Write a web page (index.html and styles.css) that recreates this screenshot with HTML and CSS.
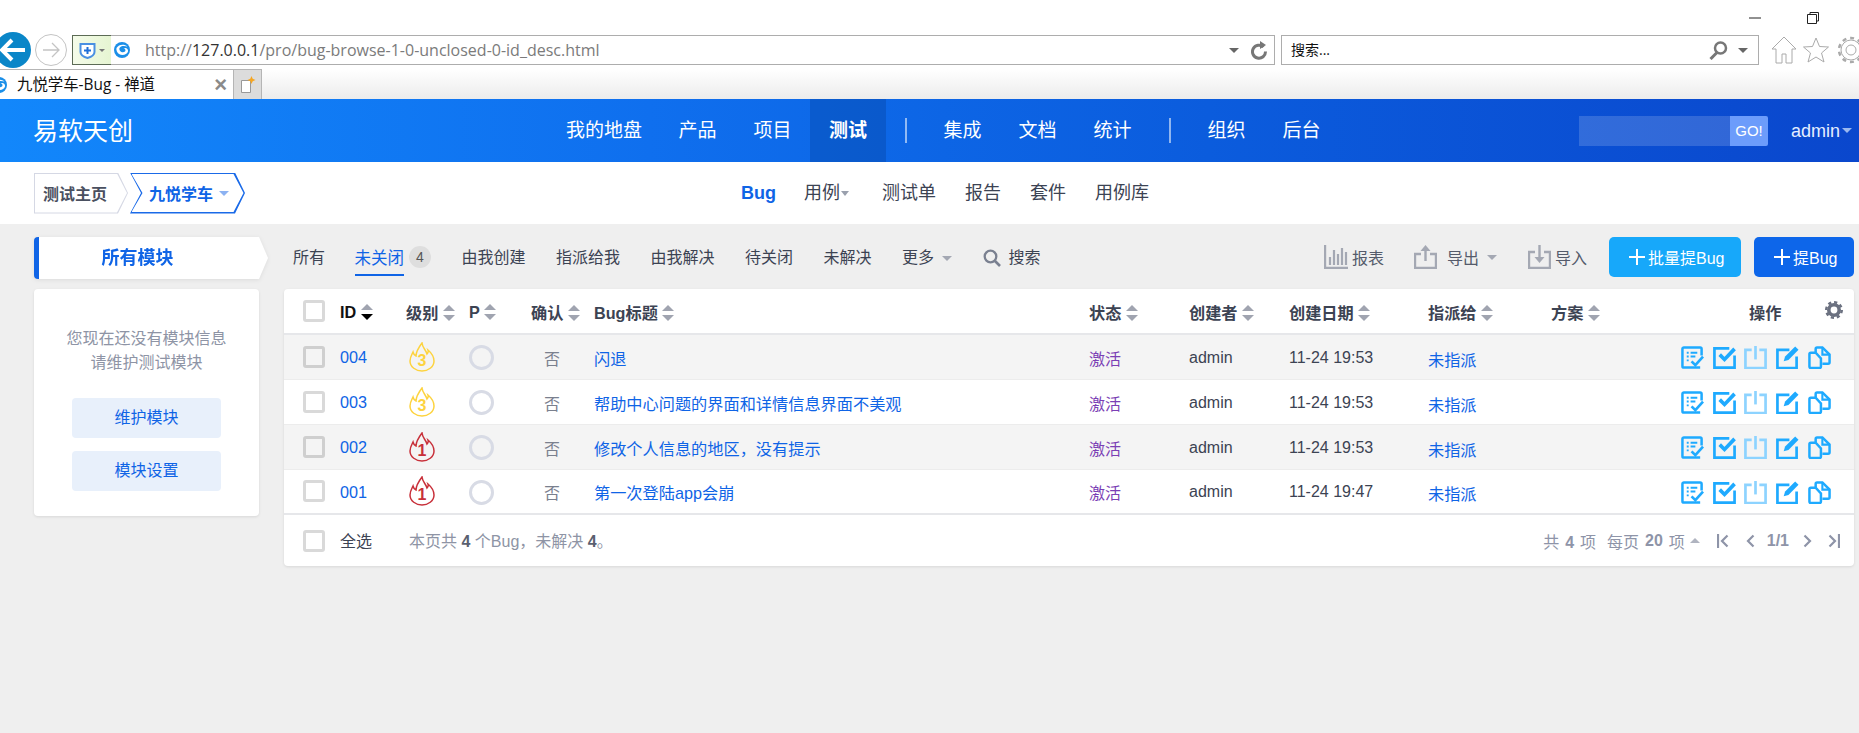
FILE: index.html
```html
<!DOCTYPE html>
<html lang="zh">
<head>
<meta charset="utf-8">
<title>九悦学车-Bug - 禅道</title>
<link rel="stylesheet" href="styles.css">
</head>
<body>
<svg class="defs" width="0" height="0" aria-hidden="true">
  <symbol id="i-doc" viewBox="0 0 24 24"><path d="M21.500 10V3a1.500 1.500 0 0 0-1.500-1.500H3A1.500 1.500 0 0 0 1.500 3v18A1.500 1.500 0 0 0 3 22.500h17" fill="none" stroke="currentColor" stroke-width="2.600"/><path d="M6 7h2m2 0h7M6 11h2m2 0h5M6 15h2" stroke="currentColor" stroke-width="2" fill="none"/><path d="M11 16l4 4 8-9" fill="none" stroke="currentColor" stroke-width="2.800"/></symbol>
  <symbol id="i-check" viewBox="0 0 24 24"><path d="M22.500 10v12.500h-21v-20H17" fill="none" stroke="currentColor" stroke-width="2.800"/><path d="M7 9l5 5 10.500-11" fill="none" stroke="currentColor" stroke-width="3.800"/></symbol>
  <symbol id="i-close" viewBox="0 0 24 24"><path d="M8 4H1.500v19h21V4H16" fill="none" stroke="currentColor" stroke-width="2.800"/><path d="M12 0v14" fill="none" stroke="currentColor" stroke-width="2.800"/></symbol>
  <symbol id="i-edit" viewBox="0 0 24 24"><path d="M14 4H1.500v19h20V11" fill="none" stroke="currentColor" stroke-width="2.800"/><path d="M9.500 11L20 .5l3.500 3.500L13 14.500l-5 1.500z" fill="currentColor"/></symbol>
  <symbol id="i-copy" viewBox="0 0 24 24"><path d="M8 7H3a1.500 1.500 0 0 0-1.500 1.500v13A1.500 1.500 0 0 0 3 23h9a1.500 1.500 0 0 0 1.500-1.500V13L8 7z" fill="none" stroke="currentColor" stroke-width="2.600"/><path d="M8 7V3a1.500 1.500 0 0 1 1.500-1.500H15l7.500 7.500v8a1.500 1.500 0 0 1-1.500 1.500h-6" fill="none" stroke="currentColor" stroke-width="2.600"/><path d="M15 1.500V9h7.500" fill="none" stroke="currentColor" stroke-width="2.200"/></symbol>
  <symbol id="i-flame" viewBox="0 0 26 30"><path d="M13 1c.5 5 4 7 5 11 1-1 1.500-2.500 1-4 3.500 3 6 7 6 11 0 6-6 10-12 10S1 25 1 19c0-3.500 1.500-6 3-9 .5 2 1.500 3.500 3 4 0-5 3-9 6-13z" fill="none" stroke="currentColor" stroke-width="1.500"/></symbol>
  <symbol id="i-plus" viewBox="0 0 16 16"><path d="M8 0v16M0 8h16" stroke="currentColor" stroke-width="2"/></symbol>
  <symbol id="i-globe" viewBox="0 0 16 16"><circle cx="8" cy="8" r="8" fill="#1b8fe8"/><path d="M2.500 6C4.500 2.500 10 1.500 13.500 4.500 10.500 3.500 6.500 3.500 5.500 6c-1 3 3 5.500 5.500 3.500 1-1 .5-3-1.500-3 2-1.500 5 0 4.500 3-1 3.500-6 4.500-9 2.500-2-1.500-3-4-2.500-6z" fill="#fff"/></symbol>
</svg>

<div class="page">
  <header class="chrome">
    <div class="winbar">
      <svg class="win-min" width="12" height="2" viewBox="0 0 12 2"><path d="M0 1h12" stroke="#222" stroke-width="1"/></svg>
      <svg class="win-restore" width="12" height="12" viewBox="0 0 12 12"><path d="M.5 2.500h9v9h-9zM3 2.500V.5h8.500V9H9.500" fill="none" stroke="#222"/></svg>
    </div>
    <div class="toolbar">
      <span class="back"><svg width="26" height="24" viewBox="0 0 26 24"><path d="M12 2L2 12l10 10M3 12h22" fill="none" stroke="#fff" stroke-width="4"/></svg></span>
      <span class="forward"><svg width="18" height="16" viewBox="0 0 18 16"><path d="M10 1l7 7-7 7M17 8H1" fill="none" stroke="#c4c4c4" stroke-width="1.300"/></svg></span>
      <div class="address">
        <span class="shield">
          <svg width="17" height="17" viewBox="0 0 17 17"><path d="M1.500 2h14v8c0 3-3.500 5-7 6-3.500-1-7-3-7-6z" fill="#fff" stroke="#4a90e2" stroke-width="2"/><path d="M8.500 5v7M5 8.500h7" stroke="#1f6fd8" stroke-width="2"/></svg>
          <i class="mini-caret"></i>
        </span>
        <svg class="globe" width="16" height="16"><use href="#i-globe"/></svg>
        <span class="url">http://<b>127.0.0.1</b>/pro/bug-browse-1-0-unclosed-0-id_desc.html</span>
        <i class="gray-caret"></i>
        <svg class="reload" width="17" height="19" viewBox="0 0 17 19"><path d="M12.500 6a6.500 6.500 0 1 0 2 4.500" fill="none" stroke="#777" stroke-width="3"/><path d="M9 0v8l6-4z" fill="#777"/></svg>
      </div>
      <div class="searchbar">
        <span class="search-ph">搜索...</span>
        <svg class="lens" width="19" height="19" viewBox="0 0 19 19"><circle cx="11.500" cy="7" r="5.500" fill="none" stroke="#777" stroke-width="2.500"/><path d="M8 11.500L1.500 18" stroke="#777" stroke-width="3"/></svg>
        <i class="gray-caret"></i>
      </div>
      <div class="tools">
        <svg width="26" height="28" viewBox="0 0 26 28"><path d="M13 1L1 13h4v14h6v-9h4v9h6V13h4z" fill="#fff" stroke="#aaa"/></svg>
        <svg width="26" height="28" viewBox="0 0 26 28"><path d="M13 2l3.500 8.500 9 .5-7 6 2.500 9-8-5-8 5 2.500-9-7-6 9-.5z" fill="#fff" stroke="#aaa"/></svg>
        <svg class="tool-gear" width="28" height="28" viewBox="0 0 28 28"><circle cx="14" cy="14" r="5" fill="none" stroke="#aaa"/><circle cx="14" cy="14" r="10" fill="none" stroke="#aaa" stroke-width="1"/><circle cx="14" cy="14" r="12" fill="none" stroke="#aaa" stroke-width="2.500" stroke-dasharray="4 3.900"/></svg>
      </div>
    </div>
    <div class="tabstrip">
      <div class="tab">
        <svg class="favicon" width="16" height="16"><use href="#i-globe"/></svg>
        <span class="tab-title">九悦学车-Bug - 禅道</span>
        <span class="tab-x">×</span>
      </div>
      <div class="newtab"><svg width="16" height="18" viewBox="0 0 16 18"><path d="M1.500 4.500h9v12h-9z" fill="#fff" stroke="#999"/><path d="M11.500 0l1.200 2.800 2.800 1.200-2.800 1.200-1.200 2.800-1.200-2.800L7.500 4l2.800-1.200z" fill="#f5a623"/></svg></div>
    </div>
  </header>

  <nav class="mainnav">
    <div class="logo">易软天创</div>
    <ul class="navlist">
      <li class="first">我的地盘</li><li>产品</li><li>项目</li><li class="active">测试</li>
      <li class="divider"></li>
      <li>集成</li><li>文档</li><li>统计</li>
      <li class="divider"></li>
      <li>组织</li><li>后台</li>
    </ul>
    <div class="navsearch"><span class="navsearch-input"></span><span class="go">GO!</span></div>
    <div class="user">admin<i class="user-caret"></i></div>
  </nav>

  <div class="subnav">
    <div class="crumbs">
      <a class="crumb crumb-home"><span>测试主页</span></a>
      <a class="crumb crumb-cur"><span>九悦学车</span><i class="blue-caret"></i></a>
    </div>
    <ul class="sublist">
      <li class="on">Bug</li>
      <li class="with-caret">用例<i class="small-caret"></i></li>
      <li>测试单</li><li>报告</li><li>套件</li><li>用例库</li>
    </ul>
  </div>

  <main class="main">
    <aside class="side">
      <div class="side-title-wrap"><div class="side-title">所有模块</div></div>
      <div class="side-card">
        <p class="side-msg">您现在还没有模块信息<br>请维护测试模块</p>
        <a class="side-btn">维护模块</a>
        <a class="side-btn">模块设置</a>
      </div>
    </aside>

    <section class="content">
      <div class="actions">
        <span class="fl">所有</span>
        <span class="fl fl-on"><span class="fl-u">未关闭</span><em class="badge">4</em></span>
        <span class="fl">由我创建</span>
        <span class="fl">指派给我</span>
        <span class="fl">由我解决</span>
        <span class="fl">待关闭</span>
        <span class="fl">未解决</span>
        <span class="fl">更多<i class="more-caret"></i></span>
        <span class="fl fl-search">
          <svg width="18" height="18" viewBox="0 0 18 18"><circle cx="7.500" cy="7.500" r="5.800" fill="none" stroke="#7a8090" stroke-width="2.300"/><path d="M12 12l5 5" stroke="#7a8090" stroke-width="2.600"/></svg>
          搜索
        </span>
        <div class="act-right">
          <span class="act act-report">
            <svg width="24" height="24" viewBox="0 0 24 24"><path d="M1 0v23h23" fill="none" stroke="#a4a8b3" stroke-width="2.400"/><path d="M6 12v8M10 5v15M14 9v11M18 3v17M22 7v13" stroke="#a4a8b3" stroke-width="2.200"/></svg>
            报表
          </span>
          <span class="act act-export">
            <svg width="23" height="24" viewBox="0 0 23 24"><path d="M7 9H1v14h21V9h-6" fill="none" stroke="#a4a8b3" stroke-width="2.400"/><path d="M11.500 16V3" stroke="#a4a8b3" stroke-width="2.400"/><path d="M11.500 0l5 6h-10z" fill="#a4a8b3"/></svg>
            <span class="act-t">导出</span><i class="more-caret"></i>
          </span>
          <span class="act act-import">
            <svg width="23" height="24" viewBox="0 0 23 24"><path d="M7 7H1v16h21V7h-6" fill="none" stroke="#a4a8b3" stroke-width="2.400"/><path d="M11.500 0v13" stroke="#a4a8b3" stroke-width="2.400"/><path d="M11.500 18l5-6h-10z" fill="#a4a8b3"/></svg>
            导入
          </span>
          <a class="btn btn-light"><svg width="16" height="16"><use href="#i-plus"/></svg>批量提Bug</a>
          <a class="btn btn-primary"><svg width="16" height="16"><use href="#i-plus"/></svg>提Bug</a>
        </div>
      </div>

      <div class="panel">
        <table class="bugs">
          <colgroup>
            <col class="c-check"><col class="c-id"><col class="c-pri"><col class="c-p"><col class="c-conf"><col class="c-title"><col class="c-status"><col class="c-creator"><col class="c-date"><col class="c-assign"><col class="c-plan"><col class="c-act">
          </colgroup>
          <thead>
            <tr>
              <th class="cell-check"><span class="cb"></span></th>
              <th class="th-id">ID<i class="sort sort-desc"></i></th>
              <th>级别<i class="sort"></i></th>
              <th>P<i class="sort"></i></th>
              <th>确认<i class="sort"></i></th>
              <th>Bug标题<i class="sort"></i></th>
              <th>状态<i class="sort"></i></th>
              <th>创建者<i class="sort"></i></th>
              <th>创建日期<i class="sort"></i></th>
              <th>指派给<i class="sort"></i></th>
              <th>方案<i class="sort"></i></th>
              <th class="th-act"><span class="th-act-t">操作</span>
                <svg class="gear" width="18" height="18" viewBox="0 0 18 18"><circle cx="9" cy="9" r="5.200" fill="none" stroke="#6b7180" stroke-width="3.600"/><circle cx="9" cy="9" r="7.800" fill="none" stroke="#6b7180" stroke-width="2.400" stroke-dasharray="3.200 2.900"/></svg>
              </th>
            </tr>
          </thead>
          <tbody>
            <tr>
              <td class="cell-check"><span class="cb"></span></td><td><a class="lnk">004</a></td>
              <td class="pri pri-3"><span class="flame"><svg width="26" height="30"><use href="#i-flame"/></svg><b>3</b></span></td>
              <td><span class="ring"></span></td><td class="no">否</td><td><a class="lnk">闪退</a></td>
              <td class="st">激活</td><td class="tx">admin</td><td class="tx">11-24 19:53</td><td class="assign"><a class="lnk">未指派</a></td><td></td>
              <td class="ops"><svg class="op"><use href="#i-doc"/></svg><svg class="op"><use href="#i-check"/></svg><svg class="op op-off"><use href="#i-close"/></svg><svg class="op"><use href="#i-edit"/></svg><svg class="op"><use href="#i-copy"/></svg></td>
            </tr>
            <tr>
              <td class="cell-check"><span class="cb"></span></td><td><a class="lnk">003</a></td>
              <td class="pri pri-3"><span class="flame"><svg width="26" height="30"><use href="#i-flame"/></svg><b>3</b></span></td>
              <td><span class="ring"></span></td><td class="no">否</td><td><a class="lnk">帮助中心问题的界面和详情信息界面不美观</a></td>
              <td class="st">激活</td><td class="tx">admin</td><td class="tx">11-24 19:53</td><td class="assign"><a class="lnk">未指派</a></td><td></td>
              <td class="ops"><svg class="op"><use href="#i-doc"/></svg><svg class="op"><use href="#i-check"/></svg><svg class="op op-off"><use href="#i-close"/></svg><svg class="op"><use href="#i-edit"/></svg><svg class="op"><use href="#i-copy"/></svg></td>
            </tr>
            <tr>
              <td class="cell-check"><span class="cb"></span></td><td><a class="lnk">002</a></td>
              <td class="pri pri-1"><span class="flame"><svg width="26" height="30"><use href="#i-flame"/></svg><b>1</b></span></td>
              <td><span class="ring"></span></td><td class="no">否</td><td><a class="lnk">修改个人信息的地区，没有提示</a></td>
              <td class="st">激活</td><td class="tx">admin</td><td class="tx">11-24 19:53</td><td class="assign"><a class="lnk">未指派</a></td><td></td>
              <td class="ops"><svg class="op"><use href="#i-doc"/></svg><svg class="op"><use href="#i-check"/></svg><svg class="op op-off"><use href="#i-close"/></svg><svg class="op"><use href="#i-edit"/></svg><svg class="op"><use href="#i-copy"/></svg></td>
            </tr>
            <tr>
              <td class="cell-check"><span class="cb"></span></td><td><a class="lnk">001</a></td>
              <td class="pri pri-1"><span class="flame"><svg width="26" height="30"><use href="#i-flame"/></svg><b>1</b></span></td>
              <td><span class="ring"></span></td><td class="no">否</td><td><a class="lnk">第一次登陆app会崩</a></td>
              <td class="st">激活</td><td class="tx">admin</td><td class="tx">11-24 19:47</td><td class="assign"><a class="lnk">未指派</a></td><td></td>
              <td class="ops"><svg class="op"><use href="#i-doc"/></svg><svg class="op"><use href="#i-check"/></svg><svg class="op op-off"><use href="#i-close"/></svg><svg class="op"><use href="#i-edit"/></svg><svg class="op"><use href="#i-copy"/></svg></td>
            </tr>
          </tbody>
        </table>
        <div class="tfoot">
          <span class="cb"></span>
          <span class="all">全选</span>
          <span class="sum">本页共 <b>4</b> 个Bug，未解决 <b>4</b>。</span>
          <div class="pager">
            <span>共 <b>4</b> 项</span>
            <span class="per">每页 <b>20</b> 项<i class="up-caret"></i></span>
            <svg class="pg pg-first" width="12" height="14" viewBox="0 0 12 14"><path d="M1 0v14M10.500 1.500L5 7l5.500 5.500" fill="none" stroke="#8e94a8" stroke-width="2.200"/></svg>
            <svg class="pg pg-prev" width="9" height="14" viewBox="0 0 9 14"><path d="M7.500 1.500L2 7l5.500 5.500" fill="none" stroke="#8e94a8" stroke-width="2.200"/></svg>
            <b class="pg-num">1/1</b>
            <svg class="pg pg-next" width="9" height="14" viewBox="0 0 9 14"><path d="M1.500 1.500L7 7l-5.500 5.500" fill="none" stroke="#8e94a8" stroke-width="2.200"/></svg>
            <svg class="pg pg-last" width="12" height="14" viewBox="0 0 12 14"><path d="M11 0v14M1.500 1.500L7 7l-5.500 5.500" fill="none" stroke="#8e94a8" stroke-width="2.200"/></svg>
          </div>
        </div>
      </div>
    </section>
  </main>
</div>
</body>
</html>
```

FILE: styles.css
```css
* { box-sizing: border-box; }
html, body { margin: 0; height: 100%; overflow: hidden; }
body {
  font-family: "Liberation Sans", "Noto Sans CJK SC", sans-serif;
  font-size: 16px;
  color: #3c4353;
  background: #efefef;
}
i, em { font-style: normal; }
ul { list-style: none; margin: 0; padding: 0; }
.defs { position: absolute; }
.page { display: flex; flex-direction: column; height: 733px; width: 1859px; overflow: hidden; }

/* browser chrome */
.chrome { height: 99px; flex: none; background: #fff; }
.winbar { height: 35px; display: flex; align-items: center; padding-left: 1749px; }
.win-min { margin-right: 46px; }
.toolbar { height: 30px; display: flex; align-items: center; }
.back {
  width: 36px; height: 36px; margin-left: -5px; border-radius: 50%;
  background: #0a86c8; display: flex; align-items: center; justify-content: center; flex: none;
}
.forward {
  width: 32px; height: 32px; margin-left: 4px; border: 1px solid #c4c4c4; border-radius: 50%;
  display: flex; align-items: center; justify-content: center; flex: none;
}
.address {
  width: 1203px; height: 30px; margin-left: 5px; border: 1px solid #adadad; display: flex; align-items: center; flex: none;
}
.shield {
  width: 39px; height: 30px; margin: -1px 0 -1px -1px; border: 1px solid #5c6b55; border-right: 0;
  background: linear-gradient(90deg, #f4fbe9, #e6f5d2); display: flex; align-items: center; padding-left: 6px; flex: none;
}
.mini-caret { margin-left: 3px; border: 3px solid transparent; border-top: 3px solid #777; border-bottom: 0; }
.globe { margin-left: 3px; flex: none; }
.url { margin-left: 15px; font-family: "Open Sans", sans-serif; font-size: 16px; color: #7b7b7b; flex: 1; white-space: nowrap; line-height: 20px; }
.url b { font-weight: 400; color: #333; }
.gray-caret { flex: none; border: 5px solid transparent; border-top: 5px solid #666; border-bottom: 0; }
.reload { margin: 0 6px 0 12px; flex: none; }
.searchbar {
  width: 478px; height: 30px; margin-left: 6px; border: 1px solid #adadad; display: flex; align-items: center; padding: 0 10px 0 9px; flex: none;
}
.search-ph { flex: 1; font-size: 14px; color: #111; line-height: 20px; font-family: "Open Sans", "Noto Sans CJK SC", sans-serif; }
.lens { margin-right: 10px; }
.tools { display: flex; margin-left: 12px; gap: 6px; align-items: center; flex: none; }
.tool-gear { margin-left: 2px; }
.tabstrip {
  height: 34px; display: flex; align-items: flex-end;
  background: linear-gradient(#fff 0, #fff 4px, #ececec 100%);
}
.tab {
  width: 233px; height: 30px; background: #fff; display: flex; align-items: center; border-top: 1px solid #b5b5b5;
  flex: none;
}
.favicon { margin-left: -9px; flex: none; }
.tab-title { margin-left: 10px; font-family: "Open Sans", "Noto Sans CJK SC", sans-serif; font-size: 15.400px; color: #111; line-height: 20px; flex: 1; white-space: nowrap; }
.tab-x { font-size: 22px; color: #8a8a8a; margin-right: 6px; line-height: 20px; font-weight: 700; font-family: "Liberation Sans", sans-serif; }
.newtab {
  width: 29px; height: 30px; background: #dcdcdc; border: 1px solid #b5b5b5; border-bottom: 0;
  display: flex; align-items: center; justify-content: center; flex: none;
}

/* main nav */
.mainnav {
  height: 63px; flex: none; display: flex; align-items: center; color: #fff;
  background: linear-gradient(90deg, #1287fb 0%, #0f6fee 35%, #0b5cdd 65%, #0a47cd 100%);
}
.logo { width: 548px; padding-left: 33px; font-size: 25px; line-height: 36px; flex: none; }
.navlist { display: flex; height: 63px; align-items: stretch; flex: none; width: 1031px; }
.navlist li { width: 75px; font-size: 19px; line-height: 63px; text-align: center; flex: none; }
.navlist li.first { width: 112px; }
.navlist li.active { background: rgba(0, 40, 110, .22); font-weight: 700; width: 76px; }
.navlist li.divider { width: 39px; }
.navlist li.divider::before { content: ""; display: block; width: 2px; height: 25px; margin: 19px auto 0; background: rgba(255, 255, 255, .55); }
.navsearch { display: flex; width: 189px; height: 30px; flex: none; }
.navsearch-input { flex: 1; background: rgba(255, 255, 255, .16); }
.go { width: 38px; background: #6c9cfb; border-radius: 0 2px 2px 0; text-align: center; font-size: 15px; line-height: 30px; }
.user { margin-left: 23px; font-size: 18px; line-height: 30px; display: flex; align-items: center; flex: none; color: #e4eeff; }
.user-caret { margin-left: 2px; border: 5px solid transparent; border-top: 5px solid #9ab8f0; border-bottom: 0; }

/* sub nav */
.subnav { height: 62px; flex: none; background: #fff; display: flex; align-items: center; padding-left: 34px; }
.crumbs { display: flex; width: 707px; flex: none; }
.crumb { height: 41px; position: relative; display: flex; align-items: center; font-weight: 700; font-size: 16px; }
.crumb span { position: relative; z-index: 1; }
.crumb::before { content: ""; position: absolute; inset: 0; background: #d5d8e4; }
.crumb::after { content: ""; position: absolute; inset: 1px; background: #fff; }
.crumb-home { width: 94px; padding-left: 9px; color: #4a5060; clip-path: polygon(0 0, 84px 0, 100% 50%, 84px 100%, 0 100%); }
.crumb-home::after { clip-path: polygon(0 0, 82px 0, 100% 50%, 82px 100%, 0 100%); }
.crumb-cur { width: 115px; margin-left: 2px; padding-left: 19px; color: #0f64e6; clip-path: polygon(0 0, 105px 0, 100% 50%, 105px 100%, 0 100%, 11px 50%); }
.crumb-cur::before { background: #1a6ae8; }
.crumb-cur::after { inset: 1.500px; clip-path: polygon(0 0, 102px 0, 100% 50%, 102px 100%, 0 100%, 11px 50%); }
.blue-caret { position: relative; z-index: 1; margin-left: 6px; border: 5px solid transparent; border-top: 5px solid #8cb2f2; border-bottom: 0; }
.sublist { display: flex; align-items: center; }
.sublist li { font-size: 18px; line-height: 26px; margin-right: 29px; color: #3c4353; display: flex; align-items: center; }
.sublist li.on { font-weight: 700; color: #0f64e6; margin-right: 28px; }
.sublist li.with-caret { margin-right: 33px; }
.small-caret { margin-left: 1px; border: 4.500px solid transparent; border-top: 5px solid #9aa0ad; border-bottom: 0; }

/* main */
.main { flex: 1; display: flex; padding: 13px 5px 0 34px; align-items: flex-start; }
.side { width: 225px; flex: none; }
.side-title-wrap { filter: drop-shadow(0 1px 2px rgba(0, 0, 0, .08)); width: 234px; }
.side-title {
  height: 42px; background: #fff; border-left: 5px solid #0f64e6; border-radius: 4px 0 0 4px; color: #0f64e6;
  font-weight: 700; font-size: 18px; line-height: 42px; text-align: center; padding-right: 32px;
  clip-path: polygon(0 0, 225px 0, 100% 50%, 225px 100%, 0 100%);
}
.side-card {
  margin-top: 10px; height: 227px; background: #fff; border-radius: 4px; padding: 38px 38px 0;
  box-shadow: 0 1px 3px rgba(0, 0, 0, .1); text-align: center;
}
.side-msg { margin: 0 -38px; height: 71px; color: #8e94a5; font-size: 16px; line-height: 24px; }
.side-btn { display: block; height: 40px; background: #e8f0fb; border-radius: 4px; color: #0f64e6; font-size: 16px; line-height: 40px; margin-bottom: 13px; }
.content { margin-left: 25px; flex: 1; min-width: 0; }

.actions { height: 52px; display: flex; align-items: flex-start; gap: 30.500px; padding-left: 9px; }
.fl { height: 40px; padding-top: 2px; font-size: 16px; line-height: 24px; color: #3c4353; display: flex; align-items: center; white-space: nowrap; }
.fl-on { color: #0f64e6; margin-left: -1px; padding-top: 0; }
.fl-u { border-bottom: 2px solid #0f64e6; height: 35px; line-height: 35px; margin-top: 2px; font-size: 16.500px; }
.badge { width: 22px; height: 22px; border-radius: 50%; background: #dedede; color: #555; font-size: 14px; line-height: 22px; text-align: center; margin-left: 5px; }
.more-caret { margin-left: 8px; border: 5px solid transparent; border-top: 5px solid #a4a8b3; border-bottom: 0; }
.fl-search { gap: 8px; }
.act-right { margin-left: auto; display: flex; align-items: center; height: 40px; }
.act { display: flex; align-items: center; font-size: 16px; color: #555b6b; white-space: nowrap; }
.act-report { gap: 4px; }
.act-export { margin-left: 30px; }
.act-t { margin-left: 10px; }
.act-import { margin-left: 31px; gap: 4px; }
.btn { height: 40px; display: flex; align-items: center; border-radius: 5px; color: #fff; font-size: 16px; gap: 3px; padding: 0 0 0 20px; }
.btn-light { margin-left: 22px; width: 132px; background: #17a8fa; }
.btn-primary { margin-left: 13px; width: 100px; background: #0d66ea; }

/* table */
.panel { background: #fff; border-radius: 4px; box-shadow: 0 1px 3px rgba(0, 0, 0, .1); width: 1570px; }
.bugs { border-collapse: collapse; table-layout: fixed; width: 100%; }
.c-check { width: 56px; } .c-id { width: 66px; } .c-pri { width: 63px; } .c-p { width: 62px; }
.c-conf { width: 63px; } .c-title { width: 495px; } .c-status { width: 100px; } .c-creator { width: 100px; }
.c-date { width: 139px; } .c-assign { width: 123px; } .c-plan { width: 120px; } .c-act { width: 183px; }
.bugs th { height: 45px; padding: 2px 0 0; text-align: left; font-size: 16.200px; font-weight: 700; color: #3c4353; border-bottom: 2px solid #e6e7ea; white-space: nowrap; }
.bugs th.cell-check { padding: 0 0 0 19px; }
.bugs td { height: 45px; padding: 2px 0 0; font-size: 16px; white-space: nowrap; border-bottom: 1px solid #ececec; }
.bugs td.cell-check { padding: 0 0 0 19px; }
.bugs tbody tr:nth-child(odd) { background: #f4f4f4; }
.bugs tbody tr:last-child td { border-bottom: 2px solid #e6e7ea; }
.cb { display: block; width: 22px; height: 22px; border: 3px solid #d9d9d9; border-radius: 3px; background: #fff; }
.bugs tbody tr:nth-child(odd) .cb { border-color: #cfcfcf; background: #f4f4f4; }
.bugs th.th-id { color: #111; }
.sort { display: inline-block; width: 12px; height: 16px; margin-left: 5px; position: relative; vertical-align: -2px; }
.sort::before, .sort::after { content: ""; position: absolute; left: -.5px; border: 6.500px solid transparent; }
.sort::before { top: 0; border-bottom: 6.500px solid #a0a4b0; border-top: 0; }
.sort::after { bottom: 0; border-top: 6.500px solid #a0a4b0; border-bottom: 0; }
.sort-desc::after { border-top-color: #000; }
.th-act { position: relative; }
.th-act-t { margin-left: 78px; }
.gear { position: absolute; right: 11px; top: 12px; }
.lnk { color: #0f64e6; font-size: 16.200px; }
.bugs td.pri { padding: 0; }
.flame { display: block; position: relative; width: 26px; height: 30px; margin-left: 3px; }
.flame svg { display: block; }
.flame b { position: absolute; left: 0; right: 0; top: 10px; text-align: center; font-size: 16px; line-height: 17px; }
.pri-3 .flame { color: #fdd33f; }
.pri-1 .flame { color: #c8303a; }
.ring { display: block; width: 25px; height: 25px; border: 3px solid #d8dbe5; border-radius: 50%; }
.bugs td.no { color: #7a808e; padding-left: 13px; }
.st { color: #7b3fb5; }
.tx { color: #3c4353; }
.assign .lnk { position: relative; top: 1px; }
.bugs td.ops { padding: 2px 0 0 10px; font-size: 0; }
.op { width: 23px; height: 23px; margin-right: 8.700px; color: #1eaaff; vertical-align: middle; }
.op-off { color: #8dd3ff; }

/* footer */
.tfoot { height: 51px; display: flex; align-items: center; padding-left: 19px; }
.all { margin-left: 15px; font-size: 16px; color: #3c4353; line-height: 24px; padding-top: 3px; }
.sum { margin-left: 37px; font-size: 16px; color: #8e94a5; line-height: 24px; padding-top: 3px; }
.sum b { color: #5a6070; }
.pager { margin-left: auto; display: flex; align-items: center; color: #8e94a8; font-size: 16px; height: 51px; padding-right: 14px; word-spacing: 1.500px; }
.pager b { font-weight: 700; }
.per { margin-left: 11px; display: flex; align-items: center; white-space: pre; }
.up-caret { margin-left: 5px; border: 5px solid transparent; border-bottom: 5px solid #b0b4c0; border-top: 0; }
.pg-first { margin-left: 17px; }
.pg-prev { margin-left: 17px; }
.pg-num { margin-left: 12px; }
.pg-next { margin-left: 14px; }
.pg-last { margin-left: 16px; }
```
